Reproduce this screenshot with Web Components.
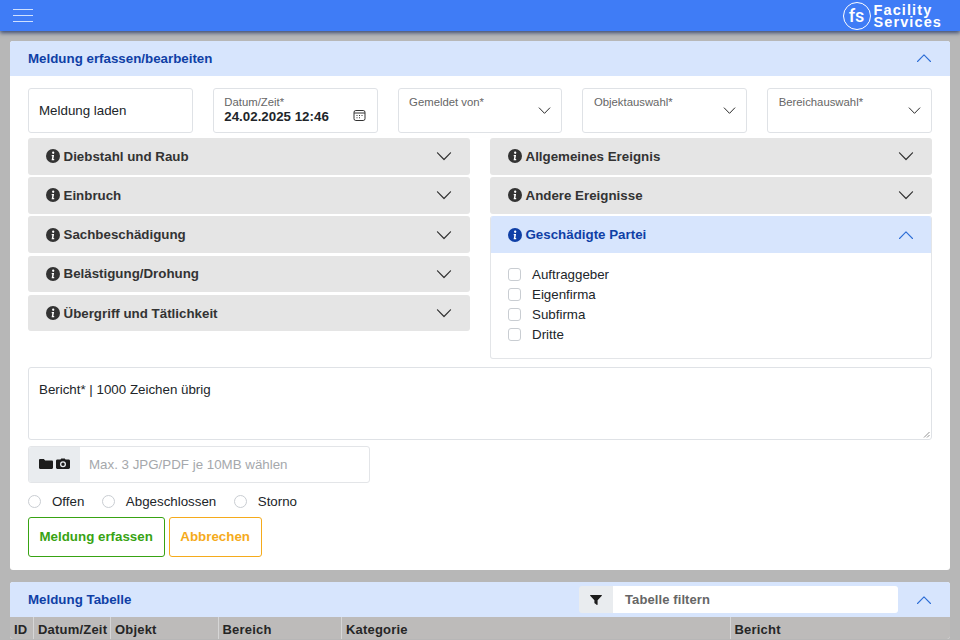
<!DOCTYPE html>
<html lang="de">
<head>
<meta charset="utf-8">
<title>Meldung</title>
<style>
  html, body { margin: 0; height: 640px; overflow: hidden; }
  body { background: #b7b7b7; font-family: "Liberation Sans", Arial, sans-serif; color: #212529; }
  main { display: flex; flex-direction: column; gap: 12.5px; padding: 9.5px 10px 0; }
  .form { display: flex; flex-direction: column; }
  .top { display: grid; grid-template-columns: repeat(5, 1fr); gap: 20px; margin-bottom: 5.5px; }
  .groups { display: grid; grid-template-columns: 1fr 1fr; gap: 20px; margin-bottom: 8px; }
  .stack { display: flex; flex-direction: column; gap: 2.7px; align-items: stretch; }
  .checks { display: flex; flex-direction: column; gap: 0; }
  .status { display: flex; gap: 17.5px; margin: 12px 0 8px; }
  .actions { display: flex; gap: 4px; }
</style>
</head>
<body>
<fs-navbar></fs-navbar>
<main>
  <fs-card title="Meldung erfassen/bearbeiten">
    <div class="form">
      <div class="top">
        <fs-plain>Meldung laden</fs-plain>
        <fs-field label="Datum/Zeit*" value="24.02.2025 12:46" icon="calendar"></fs-field>
        <fs-field label="Gemeldet von*" icon="chevron"></fs-field>
        <fs-field label="Objektauswahl*" icon="chevron"></fs-field>
        <fs-field label="Bereichauswahl*" icon="chevron"></fs-field>
      </div>
      <div class="groups">
        <div class="stack">
          <fs-accordion title="Diebstahl und Raub"></fs-accordion>
          <fs-accordion title="Einbruch"></fs-accordion>
          <fs-accordion title="Sachbeschädigung"></fs-accordion>
          <fs-accordion title="Belästigung/Drohung"></fs-accordion>
          <fs-accordion title="Übergriff und Tätlichkeit"></fs-accordion>
        </div>
        <div class="stack">
          <fs-accordion title="Allgemeines Ereignis"></fs-accordion>
          <fs-accordion title="Andere Ereignisse"></fs-accordion>
          <fs-accordion title="Geschädigte Partei" open>
            <div class="checks">
              <fs-check>Auftraggeber</fs-check>
              <fs-check>Eigenfirma</fs-check>
              <fs-check>Subfirma</fs-check>
              <fs-check>Dritte</fs-check>
            </div>
          </fs-accordion>
        </div>
      </div>
      <fs-report>Bericht* | 1000 Zeichen übrig</fs-report>
      <fs-upload>Max. 3 JPG/PDF je 10MB wählen</fs-upload>
      <div class="status">
        <fs-radio>Offen</fs-radio>
        <fs-radio>Abgeschlossen</fs-radio>
        <fs-radio>Storno</fs-radio>
      </div>
      <div class="actions">
        <fs-button color="#38a313">Meldung erfassen</fs-button>
        <fs-button color="#f5ab1c">Abbrechen</fs-button>
      </div>
    </div>
  </fs-card>
  <fs-card title="Meldung Tabelle" flush>
    <fs-filter slot="tools"></fs-filter>
    <fs-table></fs-table>
  </fs-card>
</main>

<script>
const chevronUp = (c, w = 16) => `<svg width="${w}" height="${w}" viewBox="0 0 16 16" fill="none" stroke="${c}" stroke-width="1.1" stroke-linecap="round" stroke-linejoin="round"><path d="M1.5 11.5 8 4.8l6.5 6.7"/></svg>`;
const chevronDown = (c, w = 16) => `<svg width="${w}" height="${w}" viewBox="0 0 16 16" fill="none" stroke="${c}" stroke-width="1.2" stroke-linecap="round" stroke-linejoin="round"><path d="M1.5 4.8 8 11.5l6.5-6.7"/></svg>`;
const calendar = `<svg width="13" height="13" viewBox="0 0 13 13" fill="none" stroke="#333" stroke-width="1"><rect x="1" y="1.5" width="11" height="10" rx="1.8"/><path d="M1 4h11"/><path d="M3.5 6.5h1M6 6.5h1M8.500 6.500h1M3.500 8.800h1M6 8.800h1" stroke-width="1.100"/></svg>`;

class FsNavbar extends HTMLElement {
  constructor() {
    super();
    this.attachShadow({ mode: "open" });
    this.shadowRoot.innerHTML = `
    <style>
      :host { display: flex; align-items: center; justify-content: space-between; height: 31px; padding: 0 18px 0 13px;
        background: #3f7cf6; box-shadow: 0 2px 4px rgba(20,40,90,.75); position: relative; z-index: 2; color: #fff; }
      .burger { display: flex; flex-direction: column; gap: 5px; width: 20px; margin-top: -1px; }
      .burger i { display: block; height: 1px; background: #cfe0ff; }
      .logo { display: flex; align-items: center; gap: 3px; }
      .mark { box-sizing: border-box; width: 28px; height: 28px; border: 1.5px solid #fff; border-radius: 50%;
        display: flex; align-items: center; justify-content: center; font-family: Roboto, sans-serif; font-weight: 500; font-size: 18px; padding-bottom: 1px; }
      .name { font-weight: bold; font-size: 14.5px; letter-spacing: 1.1px; padding-top: 1px; }
      .name span { display: block; height: 12.5px; line-height: 12.5px; }
    </style>
    <div class="burger"><i></i><i></i><i></i></div>
    <div class="logo"><span class="mark">fs</span><div class="name"><span>Facility</span><span>Services</span></div></div>`;
  }
}

class FsCard extends HTMLElement {
  constructor() {
    super();
    this.attachShadow({ mode: "open" });
    this.shadowRoot.innerHTML = `
    <style>
      :host { display: block; background: #fff; border-radius: 3px; overflow: hidden; }
      header { display: flex; align-items: center; height: 35px; padding: 0 18px 0 18px; background: #d7e5fd; }
      h2 { margin: 0; flex: 1; font-size: 13.33px; font-weight: bold; color: #0f3fa6; }
      .tools { display: flex; margin-right: 18px; }
      .chev { display: flex; }
      .body { padding: 12px 18px 13px; }
      :host([flush]) .body { padding: 0; }
    </style>
    <header><h2></h2><div class="tools"><slot name="tools"></slot></div><span class="chev">${chevronUp("#2f6fd6")}</span></header>
    <div class="body"><slot></slot></div>`;
  }
  connectedCallback() {
    this.shadowRoot.querySelector("h2").textContent = this.getAttribute("title");
    this.removeAttribute("title");
  }
}

class FsPlain extends HTMLElement {
  constructor() {
    super();
    this.attachShadow({ mode: "open" });
    this.shadowRoot.innerHTML = `
    <style>
      :host { display: flex; align-items: center; box-sizing: border-box; height: 45px; padding: 0 10px;
        border: 1px solid #dfe2e6; border-radius: 3px; font-size: 13.33px; color: #212529; }
    </style><slot></slot>`;
  }
}

class FsField extends HTMLElement {
  constructor() {
    super();
    this.attachShadow({ mode: "open" });
    this.shadowRoot.innerHTML = `
    <style>
      :host { display: block; position: relative; box-sizing: border-box; height: 45px; padding: 7px 10.5px;
        border: 1px solid #dfe2e6; border-radius: 3px; }
      label { display: block; font-size: 11.33px; line-height: 13px; color: #666; }
      b { display: block; font-size: 13.33px; line-height: 15px; color: #212529; }
      .icon { position: absolute; right: 10px; top: 15px; display: flex; }
      .icon.cal { top: 20px; right: 11px; }
    </style><label></label><b></b><span class="icon"></span>`;
  }
  connectedCallback() {
    const s = this.shadowRoot;
    s.querySelector("label").textContent = this.getAttribute("label");
    s.querySelector("b").textContent = this.getAttribute("value") || "";
    const icon = s.querySelector(".icon");
    if (this.getAttribute("icon") === "calendar") {
      icon.classList.add("cal");
      icon.innerHTML = calendar;
    } else {
      icon.innerHTML = chevronDown("#222", 13);
    }
  }
}

class FsAccordion extends HTMLElement {
  constructor() {
    super();
    this.attachShadow({ mode: "open" });
    this.shadowRoot.innerHTML = `
    <style>
      :host { display: block; border-radius: 3px; overflow: hidden; }
      header { display: flex; align-items: center; height: 36.500px; padding: 0 18px; gap: 3.5px; background: #e5e5e5;
        font-size: 13.33px; font-weight: bold; color: #333; }
      svg.i { flex: none; }
      span { flex: 1; }
      .chev { flex: none; display: flex; }
      .content { display: none; padding: 12px 17px 13px; }
      :host([open]) { border: 1px solid #e3e5e8; border-top: 0; box-sizing: border-box; }
      :host([open]) header { background: #d7e5fd; color: #0f3fa6; margin: 0 -1px; }
      :host([open]) .content { display: block; }
    </style>
    <header>
      <svg class="i" width="14" height="14" viewBox="0 0 14 14"><circle cx="7" cy="7" r="7" fill="currentColor"/><path d="M7.200 2.600a1.150 1.150 0 1 1-.01 2.300 1.150 1.150 0 0 1 .01-2.300zM5.700 6h2.400l-.75 4h.85v1.200H5.600l.75-4H5.700z" fill="#fff"/></svg>
      <span></span><i class="chev"></i>
    </header>
    <div class="content"><slot></slot></div>`;
  }
  connectedCallback() {
    const s = this.shadowRoot;
    s.querySelector("span").textContent = this.getAttribute("title");
    this.removeAttribute("title");
    s.querySelector(".chev").innerHTML = this.hasAttribute("open") ? chevronUp("#2f6fd6") : chevronDown("#333");
  }
}

class FsCheck extends HTMLElement {
  constructor() {
    super();
    this.attachShadow({ mode: "open" });
    this.shadowRoot.innerHTML = `
    <style>
      :host { display: flex; align-items: center; gap: 11px; height: 20px; font-size: 13.33px; color: #212529; }
      i { box-sizing: border-box; width: 13px; height: 13px; border: 1px solid #c9cdd2; border-radius: 3px; }
    </style><i></i><slot></slot>`;
  }
}

class FsRadio extends HTMLElement {
  constructor() {
    super();
    this.attachShadow({ mode: "open" });
    this.shadowRoot.innerHTML = `
    <style>
      :host { display: flex; align-items: center; gap: 11px; height: 14px; font-size: 13.33px; color: #212529; }
      i { box-sizing: border-box; width: 13px; height: 13px; border: 1px solid #c9cdd2; border-radius: 50%; }
    </style><i></i><slot></slot>`;
  }
}

class FsReport extends HTMLElement {
  constructor() {
    super();
    this.attachShadow({ mode: "open" });
    this.shadowRoot.innerHTML = `
    <style>
      :host { display: block; position: relative; box-sizing: border-box; height: 73px; padding: 14px 10px;
        border: 1px solid #dfe2e6; border-radius: 3px; font-size: 13.33px; line-height: 15px; color: #212529; margin-bottom: 6px; }
      svg { position: absolute; right: 1px; bottom: 1px; }
    </style><slot></slot>
    <svg width="7" height="7" viewBox="0 0 7 7" stroke="#777" stroke-width=".8"><path d="M6.500 1 1 6.500M6.500 4 4 6.500"/></svg>`;
  }
}

class FsUpload extends HTMLElement {
  constructor() {
    super();
    this.attachShadow({ mode: "open" });
    this.shadowRoot.innerHTML = `
    <style>
      :host { display: flex; box-sizing: border-box; width: 342px; height: 37px; border: 1px solid #e3e5e8; border-radius: 3px; overflow: hidden; }
      .btn { display: flex; align-items: center; justify-content: center; gap: 3px; width: 51px; background: #e9ecef; }
      .txt { display: flex; align-items: center; padding-left: 9px; font-size: 13.33px; color: #a5a8ac; }
    </style>
    <div class="btn">
      <svg width="14" height="12" viewBox="0 0 14 12" fill="#1c1c1c"><path d="M0 2.200C0 1.500.5 1 1.200 1h3.600l1.400 1.500h6.600c.7 0 1.200.5 1.200 1.200v6.100c0 .7-.5 1.200-1.200 1.200H1.200C.5 11 0 10.500 0 9.800z"/></svg>
      <svg width="14" height="12" viewBox="0 0 14 12"><path fill="#1c1c1c" fill-rule="evenodd" d="M4.500 1.500 5.200.5h3.600l.7 1H12.600c.8 0 1.400.6 1.400 1.400v6.700c0 .8-.6 1.400-1.400 1.400H1.400C.6 11 0 10.400 0 9.600V2.900c0-.8.6-1.400 1.400-1.400zM7 3.200a3 3 0 1 0 0 6 3 3 0 0 0 0-6zm0 1.300a1.700 1.700 0 1 1 0 3.400 1.700 1.700 0 0 1 0-3.400z"/></svg>
    </div>
    <div class="txt"><slot></slot></div>`;
  }
}

class FsButton extends HTMLElement {
  constructor() {
    super();
    this.attachShadow({ mode: "open" });
    this.shadowRoot.innerHTML = `
    <style>
      :host { display: flex; align-items: center; box-sizing: border-box; height: 40px; padding: 0 11px 1px 10.5px;
        border: 1px solid currentColor; border-radius: 3px; font-size: 13.33px; font-weight: bold; }
    </style><slot></slot>`;
  }
  connectedCallback() { this.style.color = this.getAttribute("color"); }
}

class FsFilter extends HTMLElement {
  constructor() {
    super();
    this.attachShadow({ mode: "open" });
    this.shadowRoot.innerHTML = `
    <style>
      :host { display: flex; width: 319px; height: 27px; border-radius: 3px; overflow: hidden; font-size: 13px; }
      .btn { display: flex; align-items: center; justify-content: center; width: 34px; background: #e9ecef; }
      .txt { flex: 1; display: flex; align-items: center; padding-left: 12px; background: #fff; color: #666; font-weight: bold; letter-spacing: .1px; }
    </style>
    <div class="btn"><svg width="12" height="12" viewBox="0 0 12 12" fill="#1c1c1c"><path d="M.5 1h11c.4 0 .6.5.3.800L7.600 6.200V10.500c0 .4-.4.6-.7.4L4.700 9.300a.5.5 0 0 1-.3-.4V6.200L.2 1.800C-.1 1.500.1 1 .5 1z"/></svg></div>
    <div class="txt">Tabelle filtern</div>`;
  }
}

class FsTable extends HTMLElement {
  constructor() {
    super();
    this.attachShadow({ mode: "open" });
    this.shadowRoot.innerHTML = `
    <style>
      :host { display: grid; grid-template-columns: 24px 77px 107.500px 123.500px 388.500px 1fr; height: 22px; background: #bdbbba;
        font-size: 13px; font-weight: bold; color: #262626; letter-spacing: .2px; }
      div { box-sizing: border-box; height: 22px; padding: 2px 0 0 4px; line-height: 21px; border-right: 1px solid #d6d6d6; white-space: nowrap; overflow: hidden; }
      div:first-child { padding-left: 5px; }
      div:last-child { border-right: 0; }
    </style>
    <div>ID</div><div>Datum/Zeit</div><div>Objekt</div><div>Bereich</div><div>Kategorie</div><div>Bericht</div>`;
  }
}

customElements.define("fs-navbar", FsNavbar);
customElements.define("fs-card", FsCard);
customElements.define("fs-plain", FsPlain);
customElements.define("fs-field", FsField);
customElements.define("fs-accordion", FsAccordion);
customElements.define("fs-check", FsCheck);
customElements.define("fs-radio", FsRadio);
customElements.define("fs-report", FsReport);
customElements.define("fs-upload", FsUpload);
customElements.define("fs-button", FsButton);
customElements.define("fs-filter", FsFilter);
customElements.define("fs-table", FsTable);
</script>
</body>
</html>
